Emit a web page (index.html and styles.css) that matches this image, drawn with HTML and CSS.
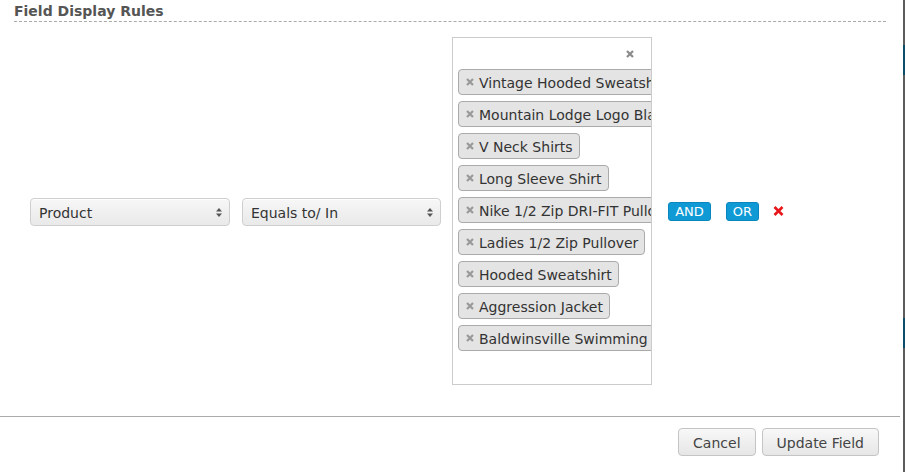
FILE: index.html
```html
<!DOCTYPE html>
<html lang="en">

<head>
    <meta charset="UTF-8">
    <meta name="viewport" content="width=device-width, initial-scale=1.0">
    <title>Field Display Rules</title>
    <link rel="stylesheet" href="styles.css">
</head>

<body>
    <div class="page">
        <div class="modal">
            <h3 class="section-title">Field Display Rules</h3>

            <div class="rule-row">
                <div class="fake-select first">
                    <span>Product</span>
                    <svg class="arrows" width="6" height="9" viewBox="0 0 6 9">
                        <path d="M3 0 L6 3.5 L0 3.5 Z M0 5.5 L6 5.5 L3 9 Z" fill="#555" />
                    </svg>
                </div>
                <div class="fake-select second">
                    <span>Equals to/ In</span>
                    <svg class="arrows" width="6" height="9" viewBox="0 0 6 9">
                        <path d="M3 0 L6 3.5 L0 3.5 Z M0 5.5 L6 5.5 L3 9 Z" fill="#555" />
                    </svg>
                </div>

                <div class="multi-box">
                    <div class="clear-all">
                        <svg width="8" height="8" viewBox="0 0 8 8">
                            <path d="M1 1 L7 7 M7 1 L1 7" stroke="#8a8a8a" stroke-width="2.2" />
                        </svg>
                    </div>
                    <div class="tag-list">
                        <div class="tag"><svg class="tag-x" width="8" height="8" viewBox="0 0 8 8"><path d="M1 1 L7 7 M7 1 L1 7" stroke="#999" stroke-width="2.2" /></svg><span>Vintage Hooded Sweatshirt</span></div>
                        <div class="tag"><svg class="tag-x" width="8" height="8" viewBox="0 0 8 8"><path d="M1 1 L7 7 M7 1 L1 7" stroke="#999" stroke-width="2.2" /></svg><span>Mountain Lodge Logo Black</span></div>
                        <div class="tag"><svg class="tag-x" width="8" height="8" viewBox="0 0 8 8"><path d="M1 1 L7 7 M7 1 L1 7" stroke="#999" stroke-width="2.2" /></svg><span>V Neck Shirts</span></div>
                        <div class="tag"><svg class="tag-x" width="8" height="8" viewBox="0 0 8 8"><path d="M1 1 L7 7 M7 1 L1 7" stroke="#999" stroke-width="2.2" /></svg><span>Long Sleeve Shirt</span></div>
                        <div class="tag"><svg class="tag-x" width="8" height="8" viewBox="0 0 8 8"><path d="M1 1 L7 7 M7 1 L1 7" stroke="#999" stroke-width="2.2" /></svg><span>Nike 1/2 Zip DRI-FIT Pullover</span></div>
                        <div class="tag"><svg class="tag-x" width="8" height="8" viewBox="0 0 8 8"><path d="M1 1 L7 7 M7 1 L1 7" stroke="#999" stroke-width="2.2" /></svg><span>Ladies 1/2 Zip Pullover</span></div>
                        <div class="tag"><svg class="tag-x" width="8" height="8" viewBox="0 0 8 8"><path d="M1 1 L7 7 M7 1 L1 7" stroke="#999" stroke-width="2.2" /></svg><span>Hooded Sweatshirt</span></div>
                        <div class="tag"><svg class="tag-x" width="8" height="8" viewBox="0 0 8 8"><path d="M1 1 L7 7 M7 1 L1 7" stroke="#999" stroke-width="2.2" /></svg><span>Aggression Jacket</span></div>
                        <div class="tag"><svg class="tag-x" width="8" height="8" viewBox="0 0 8 8"><path d="M1 1 L7 7 M7 1 L1 7" stroke="#999" stroke-width="2.2" /></svg><span>Baldwinsville Swimming</span></div>
                    </div>
                </div>

                <button class="logic-btn and-btn">AND</button>
                <button class="logic-btn or-btn">OR</button>
                <svg class="remove-rule" width="11" height="10" viewBox="0 0 11 10">
                    <path d="M1.5 1 L9.5 9 M9.5 1 L1.5 9" stroke="#e8161b" stroke-width="2.6" />
                </svg>
            </div>

            <div class="modal-footer">
                <button class="btn">Cancel</button>
                <button class="btn">Update Field</button>
            </div>
        </div>

        <div class="edge">
            <div class="edge-part"></div>
            <div class="edge-part teal"></div>
            <div class="edge-part tall"></div>
            <div class="edge-part teal"></div>
            <div class="edge-part rest"></div>
        </div>
    </div>
</body>

</html>
```

FILE: styles.css
```css
body {
    margin: 0;
    font-family: "DejaVu Sans", Verdana, sans-serif;
    background: #fff;
}

.page {
    display: flex;
    height: 472px;
    overflow: hidden;
}

.modal {
    width: 903px;
    background: #fff;
}

.section-title {
    margin: 0 17px 0 14px;
    padding: 3px 0 1px 0;
    font-size: 14px;
    line-height: 17px;
    font-weight: bold;
    color: #555;
    border-bottom: 1px dashed #aaa;
}

.rule-row {
    display: flex;
    align-items: center;
    height: 394px;
    box-sizing: border-box;
    padding: 15px 0 31px 30px;
}

.fake-select {
    display: flex;
    align-items: center;
    justify-content: space-between;
    width: 200px;
    height: 28px;
    margin-top: 2px;
    box-sizing: border-box;
    padding: 2px 7px 0 8px;
    border: 1px solid #cfcfcf;
    border-radius: 4px;
    background: linear-gradient(#f7f7f7, #e9e9e9);
    box-shadow: inset 0 1px 0 #fff;
    font-size: 14px;
    color: #333;
}

.fake-select .arrows {
    margin-top: -2px;
}

.fake-select.first {
    margin-right: 12px;
}

.fake-select.second {
    width: 199px;
    margin-right: 11px;
}

.multi-box {
    width: 200px;
    height: 348px;
    box-sizing: border-box;
    border: 1px solid #ccc;
    padding-left: 5px;
    overflow: hidden;
}

.clear-all {
    display: flex;
    justify-content: flex-end;
    align-items: center;
    height: 31px;
    padding-right: 17px;
}

.tag-list {
    display: flex;
    flex-direction: column;
    align-items: flex-start;
    gap: 6px;
}

.tag {
    display: flex;
    align-items: center;
    max-width: 200px;
    height: 26px;
    box-sizing: border-box;
    padding: 0 6px 0 7px;
    border: 1px solid #aaa;
    border-radius: 4px;
    background: #e4e4e4;
    font-size: 14px;
    color: #333;
    white-space: nowrap;
    flex-shrink: 0;
    overflow: hidden;
}

.tag span {
    padding-top: 2px;
}

.tag-x {
    margin-right: 5px;
    flex-shrink: 0;
}

.logic-btn {
    height: 19px;
    padding: 1px 0 0 0;
    border: 1px solid #0a86bf;
    border-radius: 3px;
    background: #0f9ad6;
    color: #fff;
    font-family: "DejaVu Sans", Verdana, sans-serif;
    font-size: 13px;
    line-height: 16px;
    text-align: center;
}

.and-btn {
    width: 43px;
    margin-left: 16px;
}

.or-btn {
    width: 33px;
    margin-left: 15px;
}

.remove-rule {
    margin-left: 14px;
}

.modal-footer {
    display: flex;
    justify-content: flex-end;
    gap: 6px;
    width: 900px;
    height: 56px;
    box-sizing: border-box;
    padding: 11px 21px 0 0;
    border-top: 1px solid #aaa;
}

.btn {
    height: 28px;
    padding: 2px 14px 0 14px;
    border: 1px solid #c4c4c4;
    border-radius: 4px;
    background: linear-gradient(#f8f8f8, #e6e6e6);
    color: #444;
    font-family: "DejaVu Sans", Verdana, sans-serif;
    font-size: 14px;
}

.edge {
    display: flex;
    flex-direction: column;
    width: 2px;
}

.edge-part {
    height: 45px;
    background: #5c5c5c;
}

.edge-part.teal {
    height: 30px;
    background: #0b4d6a;
}

.edge-part.tall {
    height: 243px;
}

.edge-part.rest {
    flex: 1;
}
```
